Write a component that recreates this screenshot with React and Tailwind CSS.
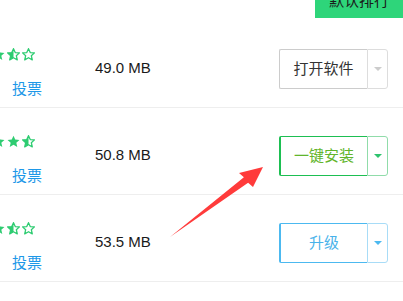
const Star = ({ type }) => {
  const pts = "6,0.6 7.6,4.2 11.5,4.5 8.6,7.1 9.5,11 6,9 2.5,11 3.4,7.1 0.5,4.5 4.4,4.2";
  return (
    <svg width="13" height="13" viewBox="0 0 12 12" className="shrink-0">
      <defs>
        <clipPath id="halfclip">
          <rect x="0" y="0" width="6" height="12" />
        </clipPath>
      </defs>
      {type === "full" && <polygon points={pts} fill="#2ecc71" />}
      {type === "half" && (
        <>
          <polygon points={pts} fill="#2ecc71" clipPath="url(#halfclip)" />
          <polygon points={pts} fill="none" stroke="#2ecc71" strokeWidth="1.2" strokeLinejoin="round" />
        </>
      )}
      {type === "empty" && (
        <polygon points={pts} fill="none" stroke="#2ecc71" strokeWidth="1.2" strokeLinejoin="round" />
      )}
    </svg>
  );
};

const themes = {
  gray: {
    box: "border-[#cccccc] text-[#333333]",
    drop: "border-[#dddddd]",
    tri: "border-t-[#cccccc]",
  },
  green: {
    box: "border-[#1dbf52] border-l-2 text-[#62b52c]",
    drop: "border-[#90dcaa]",
    tri: "border-t-[#2ec36e]",
  },
  blue: {
    box: "border-[#4cb9f0] border-l-2 text-[#48b2ea]",
    drop: "border-[#a8dcf7]",
    tri: "border-t-[#4cb9f0]",
  },
};

const ActionButton = ({ label, theme }) => {
  const t = themes[theme];
  return (
    <div className="flex h-[40px] w-[109px]">
      <div className={`flex flex-1 items-center justify-center border border-r-0 rounded-l-[2px] text-[15px] ${t.box}`}>
        {label}
      </div>
      <div className={`flex w-[21px] items-center justify-center border rounded-r-[3px] ${t.drop}`}>
        <div className={`h-0 w-0 border-x-[4px] border-t-[4px] border-x-transparent ${t.tri}`} />
      </div>
    </div>
  );
};

const rows = [
  { stars: ["full", "half", "empty"], size: "49.0 MB", label: "打开软件", theme: "gray" },
  { stars: ["full", "full", "half"], size: "50.8 MB", label: "一键安装", theme: "green" },
  { stars: ["full", "half", "empty"], size: "53.5 MB", label: "升级", theme: "blue" },
];

export default function App() {
  return (
    <div
      className="relative h-[301px] w-[403px] overflow-hidden bg-white"
      style={{ fontFamily: '"Liberation Sans", "Noto Sans CJK SC", sans-serif' }}
    >
      <div className="flex h-[21px] justify-end">
        <div className="h-[18px] w-[88px] overflow-hidden bg-[#2ed57a]">
          <div className="-mt-[8px] text-center text-[15px] leading-[18px] text-[#1a1a1a]">默认排行</div>
        </div>
      </div>

      {rows.map((r, i) => (
        <div key={i} className="flex h-[87px] border-b border-[#eeeeee]">
          <div className="-ml-[8px] flex w-[103px] flex-col">
            <div className="mt-[27px] flex gap-[2px]">
              {r.stars.map((s, j) => (
                <Star key={j} type={s} />
              ))}
            </div>
            <div className="ml-[20px] mt-[18px] text-[15px] leading-[20px] text-[#1e98e8]">投票</div>
          </div>
          <div className="mt-[38px] w-[184px] text-[15px] leading-[18px] text-[#1a1a1a]">{r.size}</div>
          <div className="mt-[28px]">
            <ActionButton label={r.label} theme={r.theme} />
          </div>
        </div>
      ))}

      <svg className="pointer-events-none absolute left-0 top-0" width="403" height="301">
        <polygon
          points="170,237 243.9,177.2 239,173 263,167 253,187 248.1,182.8"
          fill="#ff3b3b"
        />
      </svg>
    </div>
  );
}
